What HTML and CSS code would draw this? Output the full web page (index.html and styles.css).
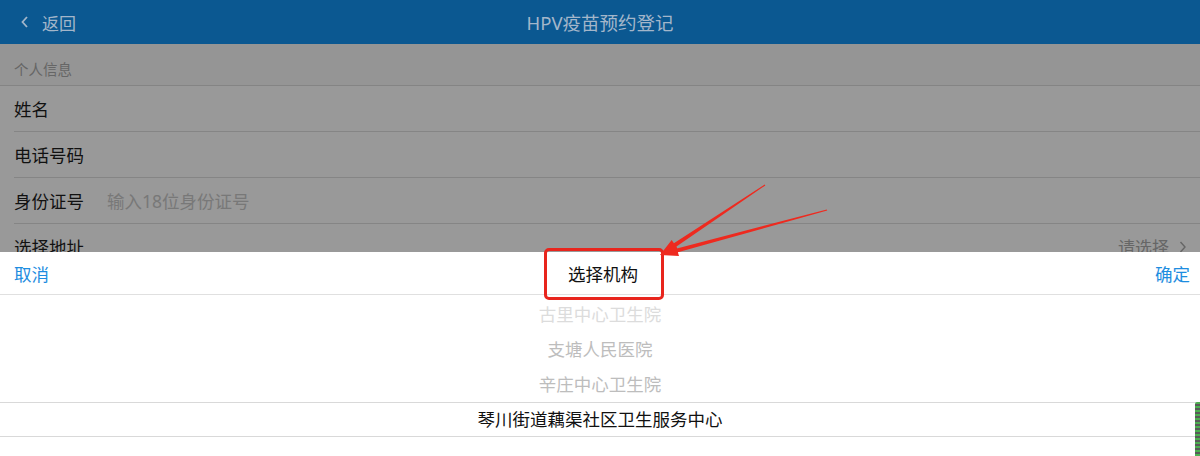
FILE: index.html
```html
<!DOCTYPE html>
<html lang="zh-CN">
<head>
    <meta charset="UTF-8">
    <meta name="viewport" content="width=device-width, initial-scale=1.0">
    <title>HPV疫苗预约登记</title>
    <link rel="stylesheet" href="styles.css">
</head>
<body>
    <!-- Page under the mask (colours are already dimmed) -->
    <header class="nav-bar">
        <div class="nav-back">
            <svg width="10" height="14" viewBox="0 0 10 14"><path d="M7 2 L2.5 7 L7 12" fill="none" stroke="#a3b6ca" stroke-width="1.8"/></svg>
            <span>返回</span>
        </div>
        <h1 class="nav-title">HPV疫苗预约登记</h1>
    </header>

    <main>
        <div class="group-title">个人信息</div>
        <div class="form-list">
            <div class="form-row"><span class="label">姓名</span></div>
            <div class="form-row"><span class="label">电话号码</span></div>
            <div class="form-row">
                <span class="label">身份证号</span>
                <span class="placeholder">输入18位身份证号</span>
            </div>
            <div class="form-row">
                <span class="label">选择地址</span>
                <span class="picker-value">请选择
                    <svg width="10" height="14" viewBox="0 0 10 14"><path d="M2.5 2 L7 7 L2.5 12" fill="none" stroke="#666" stroke-width="1.4"/></svg>
                </span>
            </div>
        </div>
    </main>

    <!-- Bottom picker sheet -->
    <div class="picker">
        <div class="picker-toolbar">
            <span class="btn">取消</span>
            <span class="picker-title">选择机构</span>
            <span class="btn">确定</span>
        </div>
        <div class="picker-wheel">
            <div class="wheel-item far">古里中心卫生院</div>
            <div class="wheel-item near">支塘人民医院</div>
            <div class="wheel-item near">辛庄中心卫生院</div>
            <div class="wheel-item selected">琴川街道藕渠社区卫生服务中心</div>
        </div>
    </div>

    <!-- Annotation on top of the screenshot -->
    <div class="mark-box"></div>
    <svg class="mark-arrows" width="1200" height="456" viewBox="0 0 1200 456">
        <polygon points="764.7,184.6 673.9,243.3 671.7,240 660,255 678.3,250 676.1,246.7 765.3,185.4" fill="#ee2a1f"/>
        <polygon points="826.8,209.4 676.9,248.4 675.8,244.5 660,255 679,256.1 677.9,252.2 827.2,210.6" fill="#ee2a1f"/>
    </svg>
    <div class="edge-bar"></div>
</body>
</html>
```

FILE: styles.css
```css
* {
    margin: 0;
    padding: 0;
    box-sizing: border-box;
}

body {
    width: 1200px;
    height: 456px;
    overflow: hidden;
    position: relative;
    font-family: "Noto Sans", "Noto Sans CJK SC", sans-serif;
    background-color: #999999;
    color: #111;
}

/* Nav bar */
.nav-bar {
    height: 44px;
    background-color: #0b5891;
    display: flex;
    align-items: center;
    justify-content: center;
    position: relative;
}

.nav-back {
    position: absolute;
    left: 20px;
    top: 0;
    height: 44px;
    display: flex;
    align-items: center;
    gap: 12px;
    color: #a3b6ca;
    font-size: 17px;
}

.nav-title {
    font-size: 18.5px;
    font-weight: normal;
    color: #a3b6ca;
}

/* Form */
.group-title {
    height: 42px;
    padding: 14px 14px 0;
    font-size: 14.5px;
    color: #666;
    background-color: #959595;
    border-bottom: 1px solid #848484;
}

.form-list {
    padding-left: 14px;
}

.form-row {
    height: 46px;
    display: flex;
    align-items: center;
    padding-right: 12px;
    border-bottom: 1px solid #858585;
    font-size: 17.5px;
}

.form-row .label {
    width: 93px;
}

.placeholder {
    color: #787878;
    font-size: 17.5px;
}

.picker-value {
    margin-left: auto;
    color: #666;
    font-size: 17px;
    display: flex;
    align-items: center;
    gap: 9px;
}

/* Picker */
.picker {
    position: absolute;
    left: 0;
    right: 0;
    top: 252px;
    bottom: 0;
    background-color: #fff;
}

.picker-toolbar {
    height: 43px;
    display: flex;
    align-items: center;
    justify-content: space-between;
    padding: 0 10px 0 14px;
    border-bottom: 1px solid #e0e0e0;
    font-size: 17.5px;
}

.picker-toolbar .btn {
    color: #1e8de0;
}

.picker-title {
    color: #111;
    margin-left: 2px;
}

.picker-wheel {
    padding-top: 2px;
}

.wheel-item {
    height: 35px;
    line-height: 35px;
    text-align: center;
    font-size: 17.5px;
}

.wheel-item.far {
    color: #dcdcdc;
}

.wheel-item.near {
    color: #bdbdbd;
}

.wheel-item.selected {
    color: #111;
    border-top: 1px solid #d9d9d9;
    border-bottom: 1px solid #d9d9d9;
    line-height: 33px;
}

/* Annotation */
.mark-box {
    position: absolute;
    left: 544px;
    top: 248px;
    width: 120px;
    height: 52px;
    border: 3px solid #e8251d;
    border-radius: 5px;
}

.mark-arrows {
    position: absolute;
    left: 0;
    top: 0;
    pointer-events: none;
}

.edge-bar {
    position: absolute;
    right: 0;
    top: 402px;
    width: 5px;
    height: 54px;
    border-radius: 2px 0 0 0;
    background: repeating-linear-gradient(#4caf50 0 2px, #5a5a5a 2px 4px);
}
```
